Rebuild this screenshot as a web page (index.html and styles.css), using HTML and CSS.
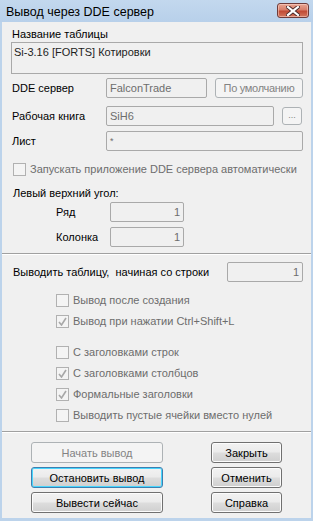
FILE: index.html
```html
<!DOCTYPE html>
<html lang="ru">
<head>
  <meta charset="UTF-8" />
  <title>Вывод через DDE сервер</title>
  <link rel="stylesheet" href="styles.css">
</head>
<body>
  <div class="window">
    <div class="titlebar">
      <span class="title">Вывод через DDE сервер</span>
      <div class="close">
        <svg width="14" height="10" viewBox="0 0 14 10">
          <path d="M2 1 L12 9 M12 1 L2 9" stroke="#4a2a2a" stroke-width="4" stroke-linecap="square" fill="none"/>
          <path d="M2 1 L12 9 M12 1 L2 9" stroke="#fff" stroke-width="2.2" stroke-linecap="square" fill="none"/>
        </svg>
      </div>
    </div>

    <div class="client top-part">
      <div class="caption">Название таблицы</div>
      <div class="memo">Si-3.16 [FORTS] Котировки</div>

      <div class="row row-dde">
        <span class="lbl">DDE сервер</span>
        <div class="field f-server">FalconTrade</div>
        <div class="btn disabled b-default">По умолчанию</div>
      </div>

      <div class="row row-book">
        <span class="lbl">Рабочая книга</span>
        <div class="field f-book">SiH6</div>
        <div class="btn disabled b-dots">...</div>
      </div>

      <div class="row row-sheet">
        <span class="lbl">Лист</span>
        <div class="field f-sheet">*</div>
      </div>

      <label class="check check-auto disabled">
        <span class="box"></span>Запускать приложение DDE сервера автоматически
      </label>

      <div class="caption corner">Левый верхний угол:</div>

      <div class="row row-pos first">
        <span class="lbl lbl-sub">Ряд</span>
        <div class="field f-num">1</div>
      </div>
      <div class="row row-pos">
        <span class="lbl lbl-sub">Колонка</span>
        <div class="field f-num">1</div>
      </div>
    </div>

    <div class="sep"></div>

    <div class="client">
      <div class="row row-start">
        <span class="lbl">Выводить таблицу,&nbsp; начиная со строки</span>
        <div class="field f-start">1</div>
      </div>

      <div class="checks">
        <label class="check c1"><span class="box"></span>Вывод после создания</label>
        <label class="check c2"><span class="box on"><svg width="9" height="9" viewBox="0 0 9 9"><path d="M1 5 L3.5 8 L8 1" stroke="#a8a8a8" stroke-width="1.6" fill="none"/></svg></span>Вывод при нажатии Ctrl+Shift+L</label>
        <label class="check c3"><span class="box"></span>С заголовками строк</label>
        <label class="check c4"><span class="box on"><svg width="9" height="9" viewBox="0 0 9 9"><path d="M1 5 L3.5 8 L8 1" stroke="#a8a8a8" stroke-width="1.6" fill="none"/></svg></span>С заголовками столбцов</label>
        <label class="check c4"><span class="box on"><svg width="9" height="9" viewBox="0 0 9 9"><path d="M1 5 L3.5 8 L8 1" stroke="#a8a8a8" stroke-width="1.6" fill="none"/></svg></span>Формальные заголовки</label>
        <label class="check c4"><span class="box"></span>Выводить пустые ячейки вместо нулей</label>
      </div>
    </div>

    <div class="sep"></div>

    <div class="buttons">
      <div class="col-left">
        <div class="btn disabled wide">Начать вывод</div>
        <div class="btn focused wide">Остановить вывод</div>
        <div class="btn wide">Вывести сейчас</div>
      </div>
      <div class="col-right">
        <div class="btn narrow">Закрыть</div>
        <div class="btn narrow">Отменить</div>
        <div class="btn narrow">Справка</div>
      </div>
    </div>
  </div>
</body>
</html>
```

FILE: styles.css
```css
:root {
  --frame: #bcd3eb;
  --face: #f0f0f0;
  --text: #000;
  --gray-text: #6d6d6d;
  --field-border: #a9a9a9;
}

* {
  box-sizing: border-box;
}

body {
  margin: 0;
  font-family: "Liberation Sans", Arial, sans-serif;
  font-size: 11px;
  color: var(--text);
  background: var(--frame);
}

.window {
  width: 313px;
  height: 521px;
  background: var(--frame);
  padding: 0 2px 3px 2px;
  display: flex;
  flex-direction: column;
  overflow: hidden;
}

.titlebar {
  height: 22px;
  flex: none;
  display: flex;
  align-items: flex-start;
  justify-content: space-between;
  background: linear-gradient(#c3d8ee, #b8d0ea);
  margin: 0 -2px;
  padding: 0 4px 0 6px;
}

.title {
  font-size: 12.5px;
  line-height: 22px;
  padding-top: 1px;
}

.close {
  margin-top: 3px;
  width: 32px;
  height: 15px;
  border: 1px solid #6f3c3a;
  border-radius: 3px;
  background: linear-gradient(#e8a593 0%, #d77e6a 45%, #c14a34 55%, #d2785f 100%);
  display: flex;
  align-items: center;
  justify-content: center;
  box-shadow: inset 0 0 0 1px rgba(255, 220, 210, 0.5);
}

.client {
  background: var(--face);
  padding: 0 8px 0 9px;
  display: flex;
  flex-direction: column;
  flex: none;
}

.top-part {
  padding-bottom: 6px;
}

.caption {
  margin-top: 5px;
  line-height: 14px;
  padding-left: 1px;
}

.memo {
  margin-top: 1px;
  height: 32px;
  border: 1px solid var(--field-border);
  background: var(--face);
  padding: 2px 2px;
  line-height: 14px;
  color: #1e1e1e;
}

.row {
  display: flex;
  align-items: center;
  height: 20px;
}

.row-dde { margin-top: 4px; }
.row-book { margin-top: 8px; }
.row-sheet { margin-top: 5px; }

.lbl {
  width: 95px;
  padding-left: 1px;
  flex: none;
}

.field {
  height: 20px;
  border: 1px solid var(--field-border);
  border-radius: 2px;
  background: var(--face);
  color: var(--gray-text);
  line-height: 18px;
  padding: 0 3px;
  white-space: nowrap;
}

.f-server { width: 102px; }
.f-book { width: 168px; }
.f-sheet { width: 198px; font-size: 9px; }

.btn {
  height: 21px;
  border: 1px solid #707070;
  border-radius: 3px;
  background: linear-gradient(#f2f2f2 0%, #ebebeb 48%, #dddddd 52%, #cfcfcf 100%);
  box-shadow: inset 0 0 0 1px #fcfcfc;
  display: flex;
  align-items: center;
  justify-content: center;
  white-space: nowrap;
}

.btn.disabled {
  border-color: #adb2b5;
  background: #f4f4f4;
  box-shadow: none;
  color: #838383;
}

.btn.focused {
  border-color: #3c7fb1;
  box-shadow: inset 0 0 0 1px #48d5fd;
}

.b-default {
  margin-left: 8px;
  width: 89px;
  height: 20px;
  letter-spacing: -0.3px;
}

.b-dots {
  margin-left: 8px;
  width: 20px;
  height: 18px;
  font-size: 9px;
  padding-bottom: 2px;
}

.check {
  display: flex;
  align-items: center;
  height: 13px;
  line-height: 13px;
  white-space: nowrap;
}

.check.disabled {
  color: var(--gray-text);
}

.box {
  width: 13px;
  height: 13px;
  flex: none;
  border: 1px solid #b1b1b1;
  background: #f4f4f4;
  margin-right: 4px;
  display: flex;
  align-items: center;
  justify-content: center;
}

.check-auto {
  margin-top: 12px;
  padding-left: 2px;
}

.corner {
  margin-top: 10px;
  padding-left: 2px;
}

.row-pos {
  margin-top: 5px;
}

.row-pos.first {
  margin-top: 2px;
}

.lbl-sub {
  width: 99px;
  padding-left: 45px;
}

.f-num {
  width: 74px;
  text-align: right;
}

.sep {
  flex: none;
  height: 2px;
  background: #a0a0a0;
  border-bottom: 1px solid #fff;
}

.row-start {
  margin-top: 7px;
}

.row-start .lbl {
  width: 216px;
  padding-left: 2px;
}

.f-start {
  width: 77px;
  text-align: right;
}

.checks {
  display: flex;
  flex-direction: column;
  padding-left: 45px;
  color: var(--gray-text);
  padding-bottom: 9px;
}

.c1 { margin-top: 12px; }
.c2 { margin-top: 8px; }
.c3 { margin-top: 18px; }
.c4 { margin-top: 8px; }

.buttons {
  flex: 1;
  background: var(--face);
  display: flex;
  padding: 9px 0 0 29px;
  gap: 48px;
}

.col-left,
.col-right {
  display: flex;
  flex-direction: column;
  gap: 4px;
}

.wide { width: 132px; }
.narrow { width: 71px; }
```
